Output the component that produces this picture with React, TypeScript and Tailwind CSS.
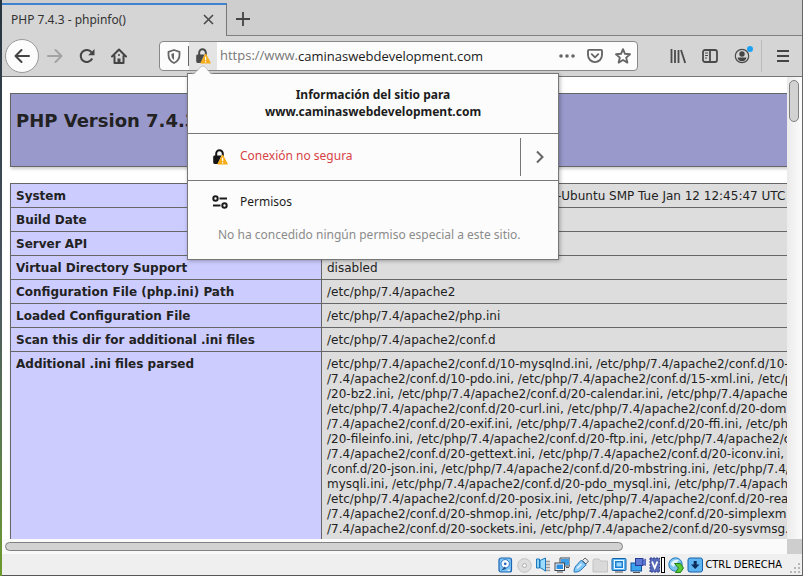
import type { ReactNode } from "react";

const iniLines = [
  "/etc/php/7.4/apache2/conf.d/10-mysqlnd.ini, /etc/php/7.4/apache2/conf.d/10-",
  "/7.4/apache2/conf.d/10-pdo.ini, /etc/php/7.4/apache2/conf.d/15-xml.ini, /etc/p",
  "/20-bz2.ini, /etc/php/7.4/apache2/conf.d/20-calendar.ini, /etc/php/7.4/apache",
  "/etc/php/7.4/apache2/conf.d/20-curl.ini, /etc/php/7.4/apache2/conf.d/20-dom",
  "/7.4/apache2/conf.d/20-exif.ini, /etc/php/7.4/apache2/conf.d/20-ffi.ini, /etc/ph",
  "/20-fileinfo.ini, /etc/php/7.4/apache2/conf.d/20-ftp.ini, /etc/php/7.4/apache2/c",
  "/7.4/apache2/conf.d/20-gettext.ini, /etc/php/7.4/apache2/conf.d/20-iconv.ini,",
  "/conf.d/20-json.ini, /etc/php/7.4/apache2/conf.d/20-mbstring.ini, /etc/php/7.4/",
  "mysqli.ini, /etc/php/7.4/apache2/conf.d/20-pdo_mysql.ini, /etc/php/7.4/apach",
  "/etc/php/7.4/apache2/conf.d/20-posix.ini, /etc/php/7.4/apache2/conf.d/20-rea",
  "/7.4/apache2/conf.d/20-shmop.ini, /etc/php/7.4/apache2/conf.d/20-simplexm",
  "/7.4/apache2/conf.d/20-sockets.ini, /etc/php/7.4/apache2/conf.d/20-sysvmsg.",
];

const rows: { name: string; value: ReactNode }[] = [
  {
    name: "System",
    value: (
      <span className="block pl-[230px]">-Ubuntu SMP Tue Jan 12 12:45:47 UTC</span>
    ),
  },
  { name: "Build Date", value: "" },
  { name: "Server API", value: "" },
  { name: "Virtual Directory Support", value: "disabled" },
  { name: "Configuration File (php.ini) Path", value: "/etc/php/7.4/apache2" },
  { name: "Loaded Configuration File", value: "/etc/php/7.4/apache2/php.ini" },
  { name: "Scan this dir for additional .ini files", value: "/etc/php/7.4/apache2/conf.d" },
  {
    name: "Additional .ini files parsed",
    value: iniLines.map((line) => (
      <span key={line} className="block">
        {line}
      </span>
    )),
  },
];

function IconButton({ label, className = "w-8", children }: { label: string; className?: string; children: ReactNode }) {
  return (
    <button type="button" aria-label={label} className={`flex shrink-0 items-center justify-center ${className}`}>
      {children}
    </button>
  );
}

function UnlockedWarning({ color }: { color: string }) {
  return (
    <svg width="16" height="16" viewBox="0 0 16 16" fill="none">
      <path d="M4.200 7V4.600a3.300 3.300 0 0 1 6.600 0V7" stroke={color} strokeWidth="2" />
      <path d="M2.600 6.600h6.800l-3.600 8.400H2.600a1.400 1.400 0 0 1-1.400-1.400V8a1.400 1.400 0 0 1 1.400-1.400z" fill={color} />
      <path d="M10.600 6.400 15.200 15H6z" fill="#f5ac18" stroke="#f5ac18" strokeWidth="1.200" strokeLinejoin="round" />
      <path d="M10.600 8.800v3.400M10.600 13.200v1.300" stroke="#fff" strokeWidth="1.300" />
    </svg>
  );
}

function SiteInfoPanel() {
  return (
    <section
      aria-label="Información del sitio"
      className="absolute top-[31px] -left-px z-10 w-[372px] border border-[#777] bg-[#fcfcfc] text-[12px] leading-4 text-[#1c1c1c] shadow-[1px_1px_4px_rgba(0,0,0,0.3)]"
    >
      <svg className="absolute -top-[9px] left-[3px]" width="24" height="10" viewBox="0 0 24 10">
        <path d="M1 10C5 9 9 1 12 1s6 8 10 9z" fill="#fcfcfc" />
        <path d="M1 9C5 8.500 9 1 12 1s6 7.500 10 8" fill="none" stroke="#b5b5b5" strokeWidth=".8" />
      </svg>
      <h2 className="border-b border-[#777] pt-3 pb-[13px] text-center leading-[17px] font-bold">
        Información del sitio para
        <br />
        www.caminaswebdevelopment.com
      </h2>
      <div className="flex h-[47px] items-center border-b border-[#777] pl-6">
        <div className="flex flex-1 items-center gap-3">
          <UnlockedWarning color="#161616" />
          <span className="pb-[2px] text-[#d74345]">Conexión no segura</span>
        </div>
        <button
          type="button"
          aria-label="Mostrar detalles de la conexión"
          className="flex h-[38px] w-[38px] items-center justify-center border-l border-[#777]"
        >
          <svg width="12" height="14" viewBox="0 0 12 14" fill="none" stroke="#666" strokeWidth="2">
            <path d="m3 1.500 5.500 5.500L3 12.500" />
          </svg>
        </button>
      </div>
      <div className="h-[78px] pt-[13px] pl-6">
        <div className="flex items-center gap-3">
          <svg width="16" height="16" viewBox="0 0 16 16" fill="none" stroke="#1c1c1c" strokeWidth="2">
            <circle cx="3.500" cy="4.500" r="2.200" />
            <path d="M7.500 4.500H15M1 11.500h7.500" />
            <circle cx="12.500" cy="11.500" r="2.200" />
          </svg>
          <span>Permisos</span>
        </div>
        <p className="mt-[17px] pl-[6px] text-[#8b8b8b]">No ha concedido ningún permiso especial a este sitio.</p>
      </div>
    </section>
  );
}

function TabStrip() {
  return (
    <div className="flex h-9 shrink-0 bg-[#cecece] text-[12px] text-[#333]">
      <div className="mt-[3px] flex w-[225px] items-center justify-between border-t-2 border-r border-t-[#3f82cf] border-r-[#777] bg-[#d5d5d5] pr-3 pb-[2px] pl-[9px]">
        <span>PHP 7.4.3 - phpinfo()</span>
        <button type="button" aria-label="Cerrar pestaña">
          <svg width="11" height="11" viewBox="0 0 11 11" stroke="#4a4a4a" strokeWidth="1.600">
            <path d="m1 1 9 9M10 1l-9 9" />
          </svg>
        </button>
      </div>
      <div className="flex flex-1 items-center border-b border-[#808080] pt-[3px] pl-[9px]">
        <button type="button" aria-label="Nueva pestaña">
          <svg width="14" height="14" viewBox="0 0 14 14" stroke="#444" strokeWidth="1.800">
            <path d="M7 0v14M0 7h14" />
          </svg>
        </button>
      </div>
    </div>
  );
}

function Toolbar() {
  return (
    <nav className="flex h-[41px] shrink-0 items-center border-b border-[#777] bg-[#d5d5d5] px-[3px]">
      <IconButton label="Atrás" className="size-[34px] rounded-full border border-[#999] bg-[#fcfcfc]">
        <svg width="16" height="16" viewBox="0 0 16 16" fill="none" stroke="#444" strokeWidth="2" strokeLinecap="round" strokeLinejoin="round">
          <path d="M15 8H1.500M7.500 2l-6 6 6 6" />
        </svg>
      </IconButton>
      <IconButton label="Adelante">
        <svg width="16" height="16" viewBox="0 0 16 16" fill="none" stroke="#a3a3a3" strokeWidth="2" strokeLinecap="round" strokeLinejoin="round">
          <path d="M1 8h13.500M8.500 2l6 6-6 6" />
        </svg>
      </IconButton>
      <IconButton label="Recargar">
        <svg width="16" height="16" viewBox="0 0 16 16" fill="none" stroke="#444" strokeWidth="2">
          <path d="M13.200 10.500A6 6 0 1 1 12.600 4.400" />
          <path d="M15.500 1v6.300H9.200z" fill="#444" stroke="none" />
        </svg>
      </IconButton>
      <IconButton label="Inicio">
        <svg width="16" height="16" viewBox="0 0 16 16" fill="none" stroke="#444" strokeWidth="2" strokeLinecap="round" strokeLinejoin="round">
          <path d="M1 8.500 8 1.500l7 7M3.500 8v7h9V8" />
          <path d="M8 15v-4.500" strokeWidth="3" strokeLinecap="butt" />
          <circle cx="8" cy="7" r="1" fill="#444" stroke="none" />
        </svg>
      </IconButton>

      <div className="ml-6 flex h-[30px] min-w-0 flex-1 items-center rounded border border-[#888] bg-[#fcfcfc]">
        <IconButton label="Protección contra el rastreo" className="w-7">
          <svg width="14" height="15" viewBox="0 0 14 15" fill="none" stroke="#666" strokeWidth="1.800">
            <path d="M7 1 12.500 2.800V6c0 4-2 6.500-5.500 8C3.500 12.500 1.500 10 1.500 6V2.800z" strokeLinejoin="round" />
            <path d="M7 4v7C5.300 9.800 4.400 8.200 4.300 5z" fill="#666" stroke="none" />
          </svg>
        </IconButton>
        <div className="relative flex h-7 w-[29px] shrink-0 items-center">
          <span className="h-5 w-px bg-[#666]" />
          <button type="button" aria-label="Ver información del sitio" className="flex h-7 flex-1 items-center justify-center bg-[#e4e4e4]">
            <UnlockedWarning color="#4a4a4a" />
          </button>
          <SiteInfoPanel />
        </div>
        <label htmlFor="url" className="pl-[3px] font-['Open_Sans',sans-serif] text-[13px] text-[#777]">
          https://www.
        </label>
        <input
          id="url"
          type="text"
          defaultValue="caminaswebdevelopment.com"
          className="h-6 min-w-0 flex-1 bg-transparent font-['Open_Sans',sans-serif] text-[13px] text-[#1a1a1a] outline-none"
        />
        <IconButton label="Acciones de página" className="w-7">
          <svg width="16" height="4" viewBox="0 0 16 4" fill="#666">
            <circle cx="2" cy="2" r="1.800" />
            <circle cx="8" cy="2" r="1.800" />
            <circle cx="14" cy="2" r="1.800" />
          </svg>
        </IconButton>
        <IconButton label="Guardar en Pocket" className="w-7">
          <svg width="16" height="14" viewBox="0 0 17 15" fill="none" stroke="#666" strokeWidth="2" strokeLinejoin="round">
            <path d="M2 1h13q1 0 1 1v4.500a7.500 7.500 0 0 1-15 0V2q0-1 1-1z" />
            <path d="m5 5.500 3.500 3.500L12 5.500" strokeLinecap="round" />
          </svg>
        </IconButton>
        <IconButton label="Añadir a marcadores" className="w-7">
          <svg width="16" height="16" viewBox="0 0 16 16" fill="none" stroke="#666" strokeWidth="1.900" strokeLinejoin="round">
            <path d="m8 1.200 2 4.600 5 .5-3.800 3.300 1.200 5L8 12l-4.400 2.600 1.200-5L1 6.300l5-.5z" />
          </svg>
        </IconButton>
      </div>

      <IconButton label="Biblioteca" className="ml-6 w-8">
        <svg width="16" height="16" viewBox="0 0 16 16" stroke="#4a4a4a" strokeWidth="1.800">
          <path d="M1.500 1v14M5 2v13M8.500 2v13M11 2l4.200 13" />
        </svg>
      </IconButton>
      <IconButton label="Barra lateral">
        <svg width="16" height="14" viewBox="0 0 16 14" fill="none" stroke="#4a4a4a" strokeWidth="1.800">
          <rect x="1" y="1" width="14" height="12" rx="2" />
          <path d="M8 1v12" />
          <path d="M3 4h3M3 6.500h3M3 9h2" strokeWidth="1" />
        </svg>
      </IconButton>
      <IconButton label="Cuenta" className="relative h-8 w-8">
        <svg width="16" height="16" viewBox="0 0 16 16">
          <circle cx="8" cy="8" r="6.700" fill="none" stroke="#4a4a4a" strokeWidth="1.200" />
          <circle cx="8" cy="6" r="2.700" fill="#444" />
          <path d="M3.600 9.500h8.800c-.2 2.400-2 3.700-4.400 3.700s-4.200-1.300-4.400-3.700z" fill="#444" />
        </svg>
        <span className="absolute top-[6px] right-[5px] size-[6px] rounded-full bg-[#1da1f2]" />
      </IconButton>
      <span className="mr-[5px] ml-[3px] h-8 w-px bg-[#bababa]" />
      <IconButton label="Menú">
        <svg width="12" height="12" viewBox="0 0 12 12" stroke="#444" strokeWidth="2">
          <path d="M0 1h12M0 6h12M0 11h12" />
        </svg>
      </IconButton>
    </nav>
  );
}

function Page() {
  return (
    <main className="min-w-0 flex-1 overflow-hidden bg-white pt-4 pl-2 font-['DejaVu_Sans',sans-serif] text-[12px] leading-[15px] text-[#222]">
      <header className="h-[74px] w-[934px] border border-[#666] bg-[#99c] px-[5px] pt-4 shadow-[1px_2px_3px_#ccc]">
        <h1 className="text-[18px] leading-[22px] font-bold">PHP Version 7.4.3</h1>
      </header>
      <table className="mt-4 h-[700px] w-[934px] table-fixed border-collapse shadow-[1px_2px_3px_#ccc]">
        <tbody>
          {rows.map((row, index) => (
            <tr key={row.name} className={index < rows.length - 1 ? "h-6" : ""}>
              <th scope="row" className="w-[311px] border border-[#666] bg-[#ccf] px-[5px] pt-[5px] pb-[3px] text-left align-top font-bold whitespace-nowrap">
                {row.name}
              </th>
              <td className="border border-[#666] bg-[#ddd] px-[5px] pt-[5px] pb-[3px] align-top whitespace-nowrap">{row.value}</td>
            </tr>
          ))}
        </tbody>
      </table>
    </main>
  );
}

const deviceIcons: { name: string; art: ReactNode }[] = [
  {
    name: "Disco duro",
    art: (
      <>
        <rect x="2" y="1" width="12.500" height="14" rx="2" fill="#7fc4f6" stroke="#1c66b4" strokeWidth="1.200" />
        <circle cx="8.200" cy="6.800" r="4.200" fill="#fff" stroke="#2a78c8" />
        <circle cx="8.200" cy="6.800" r="1.400" fill="#2a6fc0" />
        <path d="M4 13.500 8 9.500l1 2.500z" fill="#1c4f90" />
        <path d="M10.500 13.200h2.500" stroke="#fff" />
      </>
    ),
  },
  {
    name: "Disco óptico",
    art: (
      <>
        <circle cx="8.500" cy="8.500" r="6.800" fill="#dedede" stroke="#c2c2c2" />
        <circle cx="8.500" cy="8.500" r="2" fill="#f4f4f4" stroke="#b0b0b0" />
      </>
    ),
  },
  {
    name: "Audio",
    art: (
      <>
        <path d="M9 3h6v11.500H9z" fill="#d6d6d6" />
        <path d="M10 4.500h5M10 7.500h5M10 10.500h5M10 13.500h5" stroke="#999" />
        <path d="M1.500 2h3v9h-3z" fill="#8fd0f5" stroke="#1a78bd" />
        <path d="M5 3.500 10.500 1v13L5 10.500z" fill="#9fdcfb" stroke="#1a78bd" />
      </>
    ),
  },
  {
    name: "Red",
    art: (
      <>
        <rect x="6.500" y="1.500" width="9" height="7" fill="#3c9fe8" stroke="#f6f6f6" />
        <path d="M6 1h10v8H6z" fill="none" stroke="#3b4651" />
        <path d="M12 10.500h3" stroke="#555" />
        <rect x="1" y="6" width="9.500" height="7.500" fill="#f6f6f6" stroke="#3b4651" />
        <rect x="2.500" y="7.500" width="6.500" height="4.500" fill="#2a8ee0" />
        <path d="M3 15h6" stroke="#555" />
      </>
    ),
  },
  {
    name: "USB",
    art: (
      <>
        <path d="m9.500 3.500 2.500-2.500 3.500 3-2.500 3z" fill="#e5e9ee" stroke="#666" />
        <path d="m8.200 3.200 5 4.600-5.300 5.200c-2 1.700-5.300 2.500-6.800 2-.3-1.500.5-4.800 2.200-6.500z" fill="#83c9f8" stroke="#2474bb" />
        <path d="M4 11.500 8.500 7" stroke="#e3f4ff" strokeWidth="1.500" />
      </>
    ),
  },
  {
    name: "Carpetas compartidas",
    art: <path d="M1 15V3l1-1h5l1.500 2H15.500v11z" fill="#d9d9d9" stroke="#c3c3c3" />,
  },
  {
    name: "Pantalla",
    art: (
      <>
        <rect x="1" y="1.500" width="14" height="12" rx="1" fill="#5fb8f4" stroke="#1361a8" />
        <rect x="3.500" y="3.500" width="9" height="8" fill="#1d7fd2" stroke="#e9f7ff" />
        <rect x="5.500" y="5.500" width="5" height="4" fill="#9bd8ff" />
        <path d="M4 15h8" stroke="#555" />
      </>
    ),
  },
  {
    name: "Grabación",
    art: (
      <>
        <rect x="1" y="6" width="10.500" height="8" fill="#3aa5ee" stroke="#14529b" />
        <rect x="5.500" y="1.500" width="7.500" height="7" fill="#5a7ad6" stroke="#2b3996" />
        <path d="m12.500 4 3-2v6.500l-3-1.500z" fill="#5a7ad6" stroke="#2b3996" strokeWidth=".6" />
        <path d="M3 15.500h7" stroke="#555" />
      </>
    ),
  },
  {
    name: "Virtualización",
    art: (
      <>
        <rect x="1" y="1" width="9.500" height="14" fill="#5668b8" stroke="#35428b" strokeDasharray="2 1" />
        <path d="m3 4.500 2.700 6.500 2.700-6.500" fill="none" stroke="#fff" strokeWidth="1.800" />
        <rect x="12.500" y=".5" width="3" height="15" fill="#fff" stroke="#000" />
      </>
    ),
  },
  {
    name: "Ratón",
    art: (
      <>
        <circle cx="7.500" cy="7.500" r="6.700" fill="#7cc3ee" stroke="#287bbd" />
        <path d="M2.500 7c1.500-3.500 4.500-5 8.500-4L5.500 10z" fill="#dff2fd" />
        <path d="M6.500 6.500h6l3 4.500-3 4.500H7.500l3-4.500z" fill="#59c936" stroke="#23811b" />
      </>
    ),
  },
  {
    name: "Teclado",
    art: (
      <>
        <rect x="1" y="1" width="14.500" height="14" rx="2" fill="#5fb5f2" stroke="#1a63ac" />
        <path d="M6.700 4h3v3.500h2.800l-4.300 4.500-4.300-4.500h2.800z" fill="#0b2c58" />
      </>
    ),
  },
];

function StatusBar() {
  return (
    <footer className="flex h-[22px] shrink-0 items-center justify-end border-b border-[#555] bg-[#efefef]">
      <ul className="flex gap-[3px]">
        {deviceIcons.map((icon) => (
          <li key={icon.name}>
            <svg role="img" aria-label={icon.name} width="16" height="16" viewBox="0 0 16 16">
              {icon.art}
            </svg>
          </li>
        ))}
      </ul>
      <span className="ml-[2px] pt-[2px] font-['DejaVu_Sans_Condensed','DejaVu_Sans',sans-serif] text-[11px] text-black">CTRL DERECHA</span>
      <svg className="mt-2 ml-2" width="12" height="12" viewBox="0 0 12 12" fill="#b8b8b8">
        <path d="M8 0h2v2H8zM8 4h2v2H8zM4 4h2v2H4zM8 8h2v2H8zM4 8h2v2H4zM0 8h2v2H0z" />
      </svg>
    </footer>
  );
}

export default function App() {
  return (
    <div className="flex h-screen bg-gradient-to-b from-[#26343f] via-[#4b5560] to-[#6c9a2b] pl-[2px] font-['Noto_Sans',sans-serif]">
      <div className="flex min-w-0 flex-1 flex-col border-r border-[#666] bg-[#efefef]">
        <TabStrip />
        <Toolbar />
        <div className="flex min-h-0 flex-1">
          <Page />
          <div className="w-[15px] shrink-0 bg-gradient-to-r from-[#ebebeb] to-[#fcfcfc] px-[2px] pt-[3px]">
            <div className="h-[42px] w-[10px] rounded-full border border-[#808080] bg-[#d2d2d2]" />
          </div>
        </div>
        <div className="flex h-[15px] shrink-0 bg-[#fafafa]">
          <div className="flex-1 pt-[3px] pl-[3px]">
            <div className="h-[9px] w-[79%] rounded-full border border-[#808080] bg-[#d2d2d2]" />
          </div>
          <div className="w-[15px] bg-[#cecece]" />
        </div>
        <StatusBar />
      </div>
    </div>
  );
}
